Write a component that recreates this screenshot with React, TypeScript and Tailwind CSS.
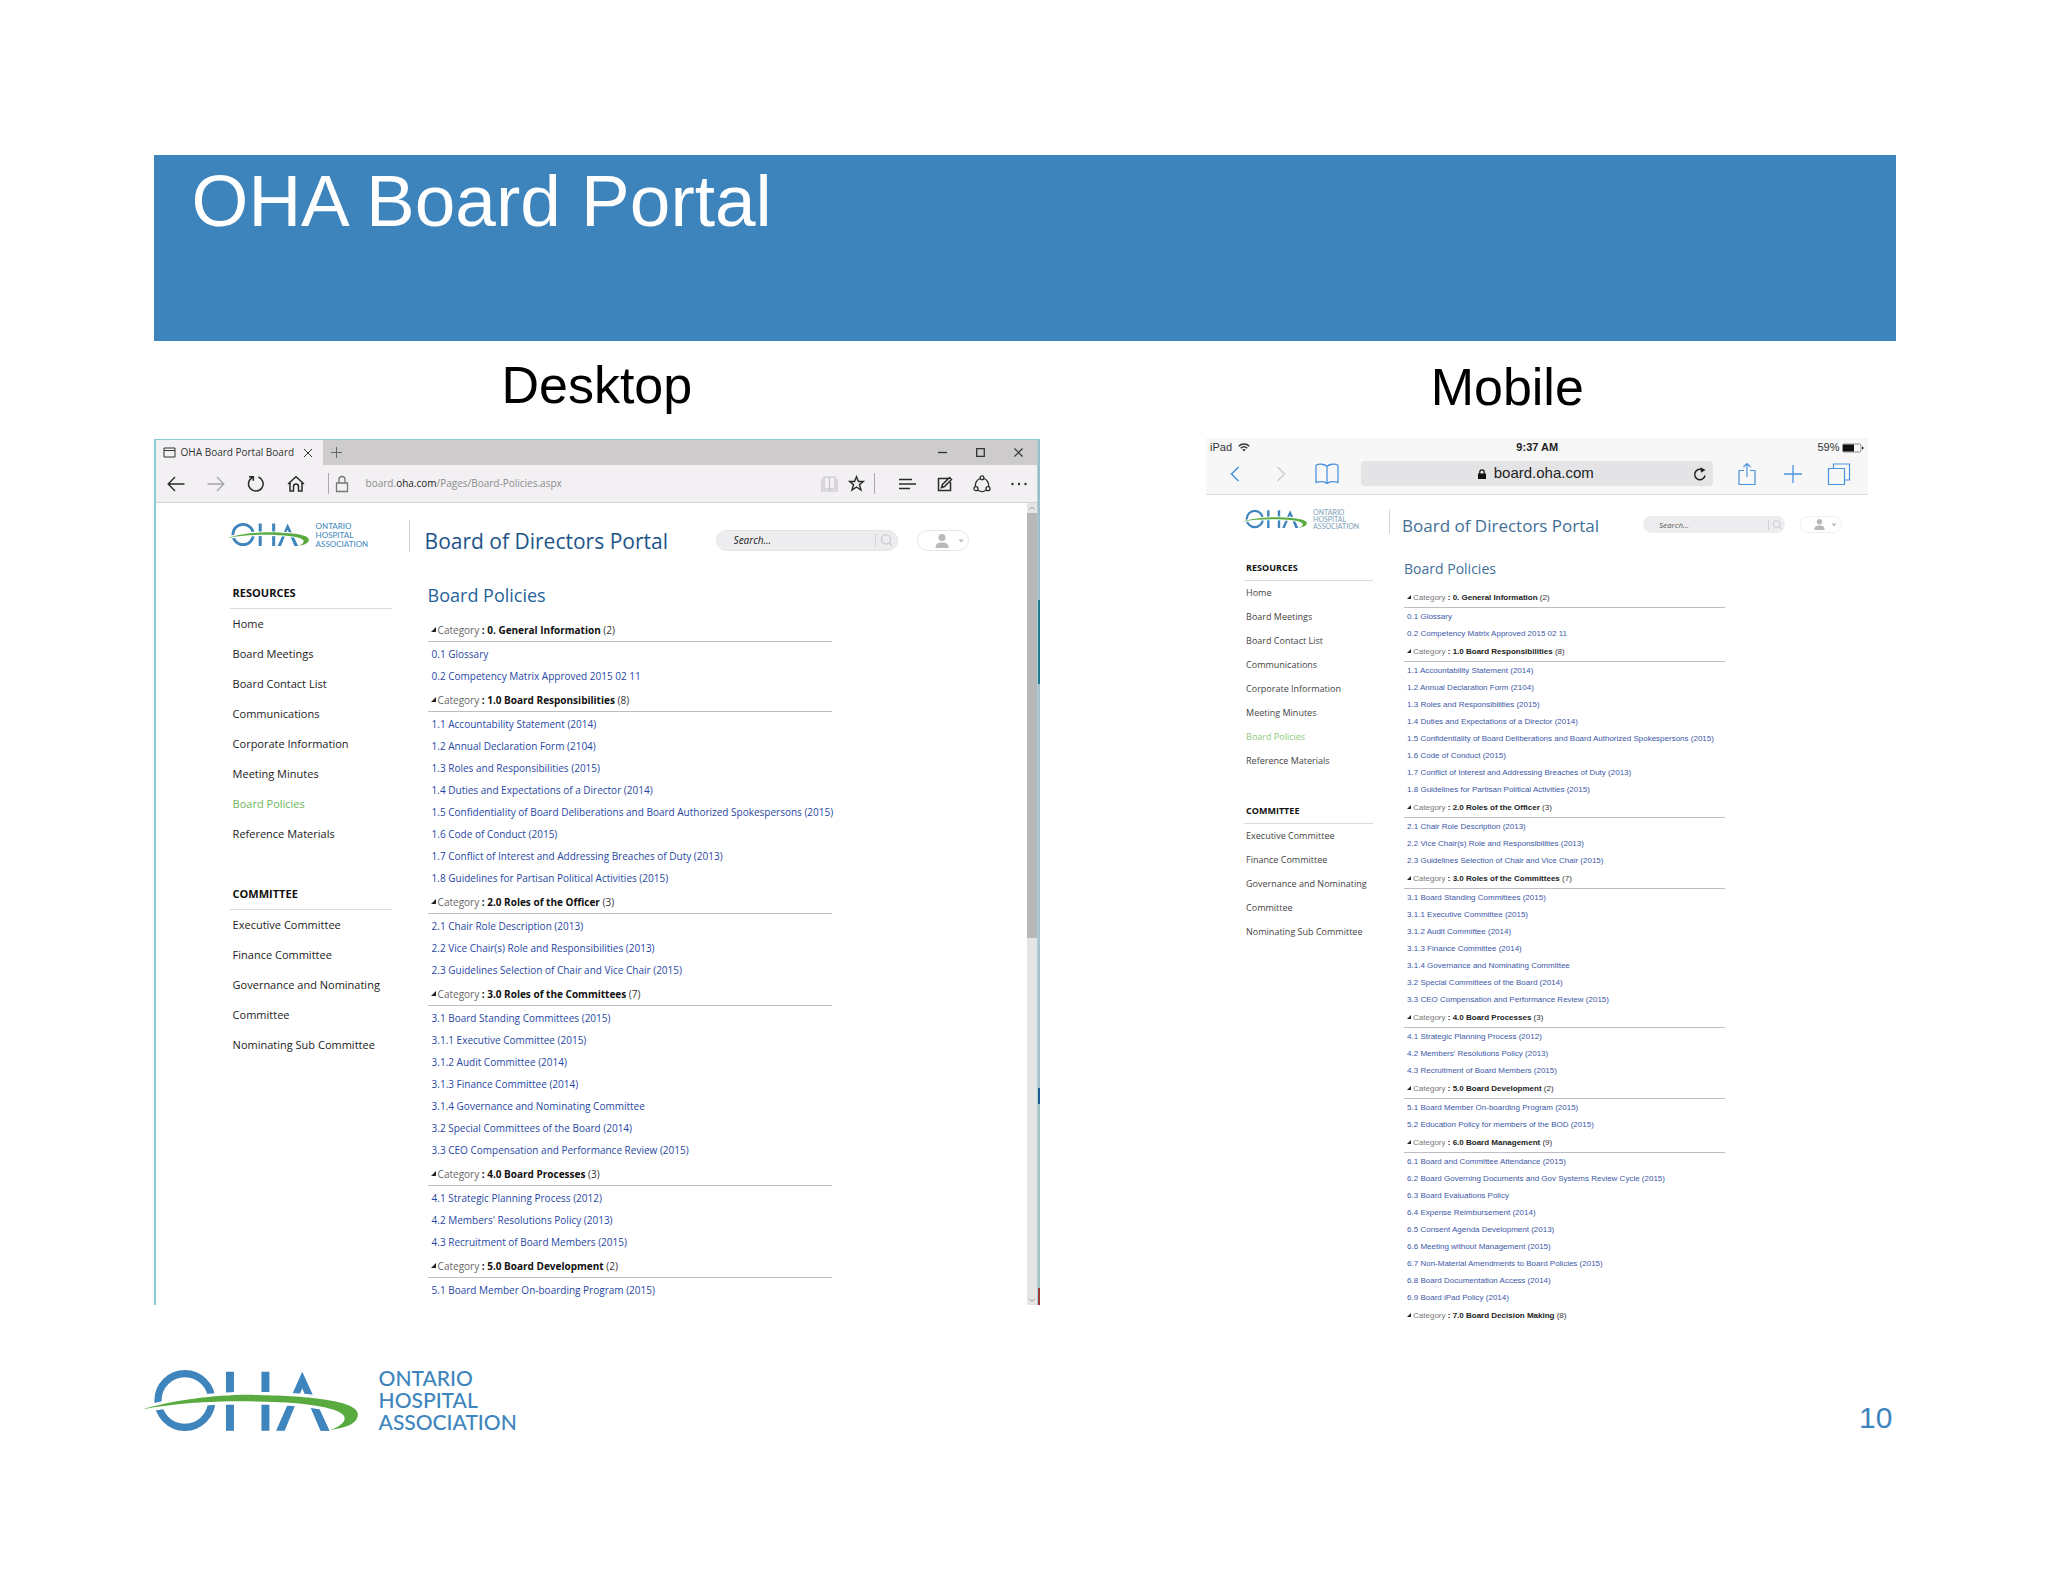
import React from 'react';
import clsx from 'clsx';

const resources = [
  'Home',
  'Board Meetings',
  'Board Contact List',
  'Communications',
  'Corporate Information',
  'Meeting Minutes',
  'Board Policies',
  'Reference Materials',
];

const committees = [
  'Executive Committee',
  'Finance Committee',
  'Governance and Nominating Committee',
  'Nominating Sub Committee',
];

const categories = [
  {
    title: '0. General Information',
    count: 2,
    links: ['0.1 Glossary', '0.2 Competency Matrix Approved 2015 02 11'],
  },
  {
    title: '1.0 Board Responsibilities',
    count: 8,
    links: [
      '1.1 Accountability Statement (2014)',
      '1.2 Annual Declaration Form (2104)',
      '1.3 Roles and Responsibilities (2015)',
      '1.4 Duties and Expectations of a Director (2014)',
      '1.5 Confidentiality of Board Deliberations and Board Authorized Spokespersons (2015)',
      '1.6 Code of Conduct (2015)',
      '1.7 Conflict of Interest and Addressing Breaches of Duty (2013)',
      '1.8 Guidelines for Partisan Political Activities (2015)',
    ],
  },
  {
    title: '2.0 Roles of the Officer',
    count: 3,
    links: [
      '2.1 Chair Role Description (2013)',
      '2.2 Vice Chair(s) Role and Responsibilities (2013)',
      '2.3 Guidelines Selection of Chair and Vice Chair (2015)',
    ],
  },
  {
    title: '3.0 Roles of the Committees',
    count: 7,
    links: [
      '3.1 Board Standing Committees (2015)',
      '3.1.1 Executive Committee (2015)',
      '3.1.2 Audit Committee (2014)',
      '3.1.3 Finance Committee (2014)',
      '3.1.4 Governance and Nominating Committee',
      '3.2 Special Committees of the Board (2014)',
      '3.3 CEO Compensation and Performance Review (2015)',
    ],
  },
  {
    title: '4.0 Board Processes',
    count: 3,
    links: [
      '4.1 Strategic Planning Process (2012)',
      "4.2 Members' Resolutions Policy (2013)",
      '4.3 Recruitment of Board Members (2015)',
    ],
  },
  {
    title: '5.0 Board Development',
    count: 2,
    links: ['5.1 Board Member On-boarding Program (2015)', '5.2 Education Policy for members of the BOD (2015)'],
  },
  {
    title: '6.0 Board Management',
    count: 9,
    links: [
      '6.1 Board and Committee Attendance (2015)',
      '6.2 Board Governing Documents and Gov Systems Review Cycle (2015)',
      '6.3 Board Evaluations Policy',
      '6.4 Expense Reimbursement (2014)',
      '6.5 Consent Agenda Development (2013)',
      '6.6 Meeting without Management (2015)',
      '6.7 Non-Material Amendments to Board Policies (2015)',
      '6.8 Board Documentation Access (2014)',
      '6.9 Board iPad Policy (2014)',
    ],
  },
  { title: '7.0 Board Decision Making', count: 8, links: [] },
];

// The desktop window is cut off after the first link of section 5
const desktopCategories = categories
  .slice(0, 6)
  .map((category, i) => (i === 5 ? { ...category, links: category.links.slice(0, 1) } : category));

type Category = (typeof categories)[number];

const LogoMark = ({ className }: { className: string }) => {
  const swoosh =
    'M66 206C150 181 270 162 390 162C540 163 716 176 716 220C716 246 690 260 634 268C662 257 676 246 676 232C676 206 590 189 480 184C340 178 190 182 66 206Z';
  return (
    <svg viewBox="66 84 652 190" className={className} aria-hidden="true">
      <circle cx="194" cy="179" r="81" fill="none" stroke="#3e84bd" strokeWidth="22" />
      <path d="M318 92h24v178h-24zM425 92h24v178h-24z" fill="#3e84bd" />
      <path d="M548 92L630 270H603L548 142L495 270H469Z" fill="#3e84bd" />
      <path d={swoosh} fill="#fff" stroke="#fff" strokeWidth="19" />
      <path d={swoosh} fill="#5aab3f" />
      {/* right foot of the A stays in front of the swoosh's clear space */}
      <path d="M577 204L600 206L630 270H606Z" fill="#3e84bd" />
    </svg>
  );
};

const Icon = ({ className, children, box = '0 0 24 24' }: { className: string; children: React.ReactNode; box?: string }) => (
  <svg viewBox={box} className={clsx('fill-none stroke-current', className)} aria-hidden="true">
    {children}
  </svg>
);

const NavGroup = ({ title, items, compact }: { title: string; items: string[]; compact?: boolean }) => (
  <div>
    <h3
      className={clsx(
        'border-b border-[#dcdcdf] font-bold text-[#111]',
        compact ? 'h-[25px] pl-[2px] text-[9px] leading-6' : 'h-[31px] pl-[3px] text-[11px] leading-[30px]'
      )}
    >
      {title}
    </h3>
    <ul>
      {items.map((item) => (
        <li key={item}>
          <a
            href="#"
            className={clsx(
              'block',
              compact ? 'pl-[2px] text-[9px] leading-6' : 'pl-[3px] text-[11px] leading-[30px]',
              item === 'Board Policies' ? (compact ? 'text-[#8ccb7c]' : 'text-[#6db65b]') : compact ? 'text-[#444]' : 'text-[#222]'
            )}
          >
            {item}
          </a>
        </li>
      ))}
    </ul>
  </div>
);

const PortalPage = ({ list, compact }: { list: Category[]; compact?: boolean }) => (
  <div className={clsx("min-w-0 flex-1 font-['Open_Sans','Noto_Sans',sans-serif]", compact ? 'pl-[38px] pt-[14px]' : 'pb-1 pl-[73px] pt-[17px]')}>
    <header className={clsx('flex', compact ? 'h-[25px]' : 'h-8')}>
      <div className={clsx('flex shrink-0 items-start', compact ? 'w-[145px] gap-[6px]' : 'w-[180px] gap-[7px]')}>
        <LogoMark className={compact ? '-ml-[2px] h-[20px] w-[65px]' : '-ml-[2px] mt-[2px] h-[25px] w-[82px]'} />
        <div
          className={clsx(
            "font-['Lato',sans-serif] font-medium",
            compact ? 'text-[7px] leading-[7px] text-[#84a4bb]' : 'mt-[2px] text-[8px] leading-[9px] text-[#4a8bbd]'
          )}
        >
          <p>ONTARIO</p>
          <p>HOSPITAL</p>
          <p>ASSOCIATION</p>
        </div>
      </div>
      <h1
        className={clsx(
          'shrink-0 border-l border-[#d5d5d8]',
          compact ? 'w-[254px] pl-3 text-[17px] leading-[33px] text-[#416f98]' : 'w-[307px] pl-[15px] text-[21px] leading-[42px] text-[#1c5489]'
        )}
      >
        Board of Directors Portal
      </h1>
      <form
        className={clsx(
          'flex shrink-0 items-center rounded-full bg-[#ededef]',
          compact ? 'mt-[7px] h-[17px] w-[142px] pl-4 pr-[3px]' : 'mt-[10px] h-[21px] w-[182px] border border-[#e4e4e7] pl-[17px] pr-1'
        )}
      >
        <input
          type="text"
          aria-label="Search"
          placeholder="Search..."
          className={clsx(
            'min-w-0 flex-1 bg-transparent italic outline-none',
            compact ? 'text-[8px] placeholder:text-[#555]' : 'text-[10px] placeholder:text-[#222]'
          )}
        />
        <button type="button" aria-label="Run search" className={clsx('border-l border-[#d3d3d6] text-[#c4c4c8]', compact ? 'pl-[3px]' : 'pl-1')}>
          <Icon className={compact ? 'size-[10px]' : 'size-[13px]'}>
            <circle cx="11" cy="10" r="8.5" strokeWidth="2" />
            <path d="M17 16l5 6" strokeWidth="2" />
          </Icon>
        </button>
      </form>
      <button
        type="button"
        aria-label="Account"
        className={clsx(
          'flex shrink-0 items-center justify-end rounded-full border bg-white text-[#b9b9bc]',
          compact ? 'ml-[15px] mt-[7px] h-[17px] w-[42px] gap-[6px] border-[#f0f0f2] pr-1' : 'ml-[19px] mt-[10px] h-[21px] w-[52px] gap-[9px] border-[#e6e6e9] pr-1'
        )}
      >
        <svg viewBox="0 0 14 14" className={clsx('fill-current', compact ? 'size-[11px]' : 'size-[14px]')}>
          <circle cx="7" cy="3.6" r="3.5" />
          <path d="M.5 14c0-4 2-5.600 6.500-5.600s6.500 1.600 6.500 5.600z" />
        </svg>
        <svg viewBox="0 0 6 4" className="h-1 w-[6px] fill-current">
          <path d="M.5.5h5L3 3.500z" />
        </svg>
      </button>
    </header>

    <div className={clsx('flex', compact ? 'mt-[22px] gap-[31px]' : 'mt-[26px] gap-9')}>
      <nav className={clsx('flex shrink-0 flex-col', compact ? 'w-[129px] gap-[26px]' : 'ml-px w-[162px] gap-[30px]')}>
        <NavGroup title="RESOURCES" items={resources} compact={compact} />
        <NavGroup title="COMMITTEE" items={committees} compact={compact} />
      </nav>

      <main className={clsx('shrink-0', compact ? 'w-[321px] text-[8px]' : 'w-[404px] text-[10px]')}>
        <h2
          className={compact ? 'h-8 text-[14px] leading-[26px] text-[#416f98]' : 'h-[39px] text-[18px] leading-[34px] text-[#24639a]'}
        >
          Board Policies
        </h2>
        <div className={compact ? "font-['Liberation_Sans',sans-serif]" : ''}>
          {list.map((category, i) => (
            <section key={category.title}>
              <h4
                className={clsx(
                  'flex items-center whitespace-pre border-[#bdbdc2] pl-[3px]',
                  compact ? 'h-5' : 'mb-px h-[25px] pt-[3px]',
                  !(compact && i === list.length - 1) && 'border-b'
                )}
              >
                <svg viewBox="0 0 6 6" className={clsx('mb-[2px] mr-[2px]', compact ? 'size-1' : 'size-[5px]')}>
                  <path d="M6 0v6H0z" fill="#222" />
                </svg>
                <span className={compact ? 'text-[#777]' : 'text-[#666]'}>Category </span>
                <span className={clsx('font-bold', compact ? 'text-[#222]' : 'text-[#111]')}>: {category.title}</span>
                <span className="text-[#333]"> ({category.count})</span>
              </h4>
              <ul>
                {category.links.map((link) => (
                  <li key={link} className={clsx('whitespace-nowrap', compact ? 'pl-[3px] leading-[17px]' : 'pl-1 leading-[22px]')}>
                    <a href="#" className={compact ? 'text-[#3d58a8]' : 'text-[#1f47a5]'}>
                      {link}
                    </a>
                  </li>
                ))}
              </ul>
            </section>
          ))}
        </div>
      </main>
    </div>
  </div>
);

const DesktopWindow = () => (
  <div className="flex border-l-2 border-t border-[#8ccbd6] bg-white font-['Open_Sans','Noto_Sans',sans-serif]">
    <div className="min-w-0 flex-1">
      <div className="flex h-[25px] bg-[#cdcbcc] text-[#333]">
        <div className="flex w-[167px] items-center bg-[#f2f0f3] pl-[7px]">
          <Icon box="0 0 13 11" className="h-[11px] w-[13px]">
            <path d="M1 1h11v9H1zM1 3.500h11" />
          </Icon>
          <span className="ml-[5px] w-[122px] whitespace-nowrap text-[10px] text-[#333]">OHA Board Portal Board</span>
          <button type="button" aria-label="Close tab">
            <Icon box="0 0 10 10" className="size-[10px]">
              <path d="M1 1l8 8M9 1l-8 8" />
            </Icon>
          </button>
        </div>
        <button type="button" aria-label="New tab" className="flex w-7 items-center justify-center text-[#666]">
          <Icon box="0 0 11 11" className="size-[11px]">
            <path d="M5.500 0v11M0 5.500h11" />
          </Icon>
        </button>
        <div className="ml-auto flex">
          <button type="button" aria-label="Minimize" className="flex w-[38px] items-center justify-center">
            <Icon box="0 0 9 9" className="size-[9px]">
              <path d="M0 4.500h9" strokeWidth="1.300" />
            </Icon>
          </button>
          <button type="button" aria-label="Maximize" className="flex w-[38px] items-center justify-center">
            <Icon box="0 0 9 9" className="size-[9px]">
              <path d="M.7.7h7.600v7.600H.7z" strokeWidth="1.300" />
            </Icon>
          </button>
          <button type="button" aria-label="Close" className="flex w-[38px] items-center justify-center">
            <Icon box="0 0 9 9" className="size-[9px]">
              <path d="M.5.5l8 8M8.500.5l-8 8" strokeWidth="1.200" />
            </Icon>
          </button>
        </div>
      </div>

      <div className="flex h-[38px] items-center border-b border-[#d4d2d5] bg-[#f2f0f3] text-[#2b2b2b]">
        <button type="button" aria-label="Back" className="flex w-10 justify-center">
          <Icon box="0 0 18 16" className="h-4 w-[18px]">
            <path d="M17.500 8H1.500M8 1L1.200 8L8 15" strokeWidth="1.400" />
          </Icon>
        </button>
        <button type="button" aria-label="Forward" className="flex w-10 justify-center text-[#a5a3a6]">
          <Icon box="0 0 18 16" className="h-4 w-[18px]">
            <path d="M.5 8h16M10 1l6.800 7L10 15" strokeWidth="1.300" />
          </Icon>
        </button>
        <button type="button" aria-label="Refresh" className="flex w-10 justify-center">
          <Icon box="0 0 18 18" className="size-[18px]">
            <path d="M11.500 2A7.300 7.300 0 1 1 5.500 2.300M2 1.800h4.300v4" strokeWidth="1.500" />
          </Icon>
        </button>
        <button type="button" aria-label="Home page" className="flex w-10 justify-center">
          <Icon box="0 0 18 18" className="size-[18px]">
            <path d="M1 9L9 1.800L17 9M3 7.500V16h3.500v-4.500a2.500 2.500 0 0 1 5 0V16H15V7.500" strokeWidth="1.500" />
          </Icon>
        </button>
        <div className="ml-3 h-[21px] w-px bg-[#aaa8ab]" />
        <Icon box="0 0 14 18" className="ml-[6px] h-[18px] w-[14px] text-[#777]">
          <path d="M1.500 8h11v8.500h-11zM4 8V4.500a3 3 0 0 1 6 0V8" strokeWidth="1.300" />
        </Icon>
        <p className="ml-[17px] whitespace-nowrap text-[10px] text-[#8c8c8c]">
          board.<span className="text-[#222]">oha.com</span>/Pages/Board-Policies.aspx
        </p>
        <div className="ml-auto flex items-center">
          <button type="button" aria-label="Reading view" className="flex w-[27px] justify-center text-[#c6c4c7]">
            <Icon box="0 0 17 16" className="h-4 w-[17px]">
              <path d="M3 1h4.500l1 1l1-1H14v12H9.500l-1 1l-1-1H3zM8.500 2v12M1 3v12h15V3" strokeWidth="1.200" />
            </Icon>
          </button>
          <button type="button" aria-label="Add to favorites" className="flex w-[26px] justify-center">
            <Icon box="0 0 18 18" className="size-[17px]">
              <path d="M9 1.800l2.100 5h5.300l-4.300 3.500l1.700 5.700L9 12.700L4.200 16l1.700-5.700L1.600 6.800h5.300z" strokeWidth="1.500" />
            </Icon>
          </button>
          <div className="ml-[5px] mr-[14px] h-[21px] w-px bg-[#aaa8ab]" />
          <button type="button" aria-label="Hub" className="flex w-[37px] justify-center">
            <Icon box="0 0 17 12" className="h-3 w-[17px]">
              <path d="M0 1.500h13M0 6h17M0 10.500h11" strokeWidth="1.400" />
            </Icon>
          </button>
          <button type="button" aria-label="Make a web note" className="flex w-[37px] justify-center">
            <Icon box="0 0 16 16" className="size-[16px]">
              <path d="M11 2.500H1.500v12H13.500V6M4.500 11.500l1-3L12.500 1.500l2 2l-7 7z" strokeWidth="1.500" />
            </Icon>
          </button>
          <button type="button" aria-label="Share" className="flex w-[37px] justify-center">
            <Icon box="0 0 18 18" className="size-[18px]">
              <circle cx="9" cy="2.700" r="1.900" strokeWidth="1.300" />
              <circle cx="3" cy="13.700" r="2" strokeWidth="1.300" />
              <circle cx="15" cy="13.700" r="2" strokeWidth="1.300" />
              <path d="M7 3.500C4 4.500 2 8 2.300 11.500M11 3.500c3 1 5 4.500 4.700 8M5 15.300c2.500 1.700 5.500 1.700 8 0" strokeWidth="1.300" />
            </Icon>
          </button>
          <button type="button" aria-label="More actions" className="flex w-[37px] justify-center">
            <svg viewBox="0 0 16 4" className="h-1 w-4 fill-current">
              <circle cx="1.500" cy="2" r="1.200" />
              <circle cx="8" cy="2" r="1.200" />
              <circle cx="14.500" cy="2" r="1.200" />
            </svg>
          </button>
        </div>
      </div>

      <div className="flex">
        <PortalPage list={desktopCategories} />
        <div className="flex w-[10px] flex-col bg-[#e6e5e6] text-[#999]">
          <Icon box="0 0 10 10" className="size-[10px] shrink-0">
            <path d="M2.500 6.500L5 4l2.500 2.500" />
          </Icon>
          <div className="h-[53%] bg-[#b9b8b9]" />
          <Icon box="0 0 10 10" className="mt-auto size-[10px] shrink-0">
            <path d="M2.500 4L5 6.500L7.500 4" />
          </Icon>
        </div>
      </div>
    </div>

    {/* sliver of the window that sits behind the browser */}
    <div className="flex w-[3px] flex-col border-l border-[#a5d3d6]">
      <div className="grow-[160] bg-[#9fbccb]" />
      <div className="grow-[84] bg-[#20788f]" />
      <div className="grow-[404] bg-[#acc3cb]" />
      <div className="grow-[16] bg-[#1b5a92]" />
      <div className="grow-[184] bg-[#a7c0c0]" />
      <div className="grow-[17] bg-[#9c3a35]" />
    </div>
  </div>
);

const MobileWindow = () => (
  <div className="font-['Liberation_Sans',sans-serif]">
    <div className="border-b border-[#dcdcde] bg-[#f7f7f8]">
      <div className="grid h-[19px] grid-cols-3 items-center px-1 text-[11px] text-[#333]">
        <div className="flex items-center gap-[6px]">
          iPad
          <svg viewBox="0 0 12 9" className="h-[9px] w-[12px]" fill="none" stroke="#333" strokeWidth="1.500">
            <path d="M.7 3.200c3-2.900 7.600-2.900 10.600 0M2.700 5.300c2-1.800 4.600-1.800 6.600 0" />
            <path d="M4.300 6.600c1-.9 2.400-.9 3.400 0L6 8.500z" fill="#333" stroke="none" />
          </svg>
        </div>
        <p className="text-center font-bold text-[#222]">9:37 AM</p>
        <div className="flex items-center justify-end gap-[3px]">
          59%
          <svg viewBox="0 0 22 10" className="h-[10px] w-[22px]">
            <rect x=".5" y="1" width="18.500" height="8" rx="1.500" fill="none" stroke="#777" strokeWidth=".8" />
            <rect x="1" y="1.500" width="11" height="7" fill="#111" />
            <path d="M20 3.500c2 0 2 3 0 3z" fill="#222" />
          </svg>
        </div>
      </div>

      <div className="flex h-[37px] items-center px-[6px] pb-1 text-[#4c93de]">
        <button type="button" aria-label="Back" className="flex w-[46px] justify-center">
          <Icon box="0 0 10 16" className="h-4 w-[10px]">
            <path d="M8.500 1L1.500 8l7 7" strokeWidth="1.600" />
          </Icon>
        </button>
        <button type="button" aria-label="Forward" className="flex w-[46px] justify-center text-[#cfcfd2]">
          <Icon box="0 0 10 16" className="h-4 w-[10px]">
            <path d="M1.500 1l7 7l-7 7" strokeWidth="1.600" />
          </Icon>
        </button>
        <button type="button" aria-label="Bookmarks" className="flex w-[46px] justify-center">
          <Icon box="0 0 24 22" className="h-[22px] w-6">
            <path
              d="M12 3.500v17M12 3.500C10 .8 4 .6 1 2.200v17.300c3-1.200 8-1.200 9.700.2q1.300 1.300 2.600 0c1.700-1.400 6.700-1.400 9.700-.2V2.200c-3-1.600-9-1.400-11 1.300z"
              strokeWidth="1.300"
            />
          </Icon>
        </button>
        <div className="mx-[11px] flex h-[25px] min-w-0 flex-1 items-center rounded bg-[#e4e4e6] text-[#222]">
          <p className="flex flex-1 items-center justify-center gap-2 pl-[17px] text-[15px]">
            <svg viewBox="0 0 8 10" className="h-[10px] w-2">
              <path d="M0 4.500h8V10H0z" fill="#111" />
              <path d="M1.800 5V3a2.200 2.200 0 0 1 4.400 0v2" fill="none" stroke="#111" strokeWidth="1.200" />
            </svg>
            board.oha.com
          </p>
          <button type="button" aria-label="Reload" className="mr-[6px]">
            <Icon box="0 0 14 14" className="size-[14px]">
              <path d="M12 8.500A5.200 5.200 0 1 1 9.500 3" strokeWidth="1.500" />
              <path d="M7.500.3L12.500 3L8 5.800z" fill="currentColor" stroke="none" />
            </Icon>
          </button>
        </div>
        <button type="button" aria-label="Share" className="flex w-[46px] justify-center">
          <Icon box="0 0 18 24" className="h-6 w-[18px]">
            <path d="M6 8.500H1v14h16v-14h-5M9 15V1.500M5.500 5L9 1.500L12.500 5" strokeWidth="1.200" />
          </Icon>
        </button>
        <button type="button" aria-label="New tab" className="flex w-[46px] justify-center">
          <Icon box="0 0 18 18" className="size-[18px]">
            <path d="M9 0v18M0 9h18" strokeWidth="1.300" />
          </Icon>
        </button>
        <button type="button" aria-label="Tabs" className="flex w-[46px] justify-center">
          <Icon box="0 0 24 24" className="size-[24px]">
            <path d="M1.500 6.500h16v16h-16zM6.500 6.500v-4.500h16v16h-5" strokeWidth="1.200" />
          </Icon>
        </button>
      </div>
    </div>
    <PortalPage list={categories} compact />
  </div>
);

const App = () => (
  <div className="min-h-screen bg-white pl-[7.5%] pr-[7.4%] pt-[155px] font-['Liberation_Sans',sans-serif]">
    <header className="h-[186px] bg-[#3d83bc] pl-[38px] pt-[10px]">
      <h1 className="text-[73px] leading-[72px] text-white">OHA Board Portal</h1>
    </header>

    <div className="mt-[14px] grid grid-cols-[886fr_690fr] items-start gap-x-[166px]">
      <section className="min-w-0">
        <h2 className="mb-6 text-center text-[52px] leading-[60px] text-black">Desktop</h2>
        <DesktopWindow />
      </section>
      <section className="min-w-0 pr-7">
        <h2 className="mb-[21px] pr-[60px] pt-[2px] text-center text-[52px] leading-[60px] text-black">Mobile</h2>
        <MobileWindow />
      </section>
    </div>

    <footer className="mt-[38px] flex items-center justify-between pb-20 text-[#3e84bd]">
      <div className="-ml-3 flex items-center gap-5">
        <LogoMark className="h-[63px] w-[217px]" />
        <div className="font-['Lato',sans-serif] text-[21px] font-medium leading-[22px]">
          <p>ONTARIO</p>
          <p>HOSPITAL</p>
          <p>ASSOCIATION</p>
        </div>
      </div>
      <p className="pr-1 pt-9 text-[30px] leading-9">10</p>
    </footer>
  </div>
);

export default App;
